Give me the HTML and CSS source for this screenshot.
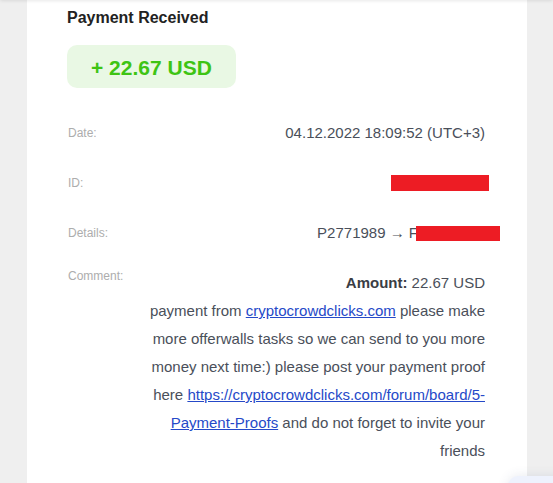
FILE: index.html
```html
<!DOCTYPE html>
<html lang="en">
<head>
<meta charset="utf-8">
<title>Payment Received</title>
<link rel="stylesheet" href="styles.css">
</head>
<body>
<div class="topbar"></div>
<main class="page">
  <section class="card">
    <h1 class="title">Payment Received</h1>
    <div class="amount-pill">+ 22.67 USD</div>
    <div class="rows">
      <div class="row">
        <div class="label">Date:</div>
        <div class="value">04.12.2022 18:09:52 (UTC+3)</div>
      </div>
      <div class="row">
        <div class="label">ID:</div>
        <div class="value"><span class="redact redact-id"></span></div>
      </div>
      <div class="row">
        <div class="label">Details:</div>
        <div class="value">P2771989 → F<span class="redact redact-details"></span></div>
      </div>
      <div class="row row-comment">
        <div class="label">Comment:</div>
        <div class="value"><b class="strong">Amount:</b> 22.67 USD<br>payment from <a href="#" class="link">cryptocrowdclicks.com</a> please make more offerwalls tasks so we can send to you more money next time:) please post your payment proof here <a href="#" class="link">https://cryptocrowdclicks.com/forum/board/5-Payment-Proofs</a> and do not forget to invite your friends</div>
      </div>
    </div>
  </section>
</main>
<div class="widget"></div>
</body>
</html>
```
FILE: styles.css
```css
html, body {
  margin: 0;
  padding: 0;
}
body {
  background: #efefef;
  font-family: "Liberation Sans", Arial, sans-serif;
  overflow: hidden;
}
.topbar {
  position: fixed;
  top: -10px;
  left: 0;
  right: 0;
  height: 10px;
  box-shadow: 0 0 4px rgba(0, 0, 0, 0.14);
  z-index: 5;
}
.page {
  padding-left: 27px;
}
.card {
  box-sizing: border-box;
  width: 500px;
  min-height: 483px;
  background: #ffffff;
  padding: 8px 42px 30px 40px;
}
.title {
  margin: 0;
  font-size: 16px;
  line-height: 20px;
  font-weight: bold;
  color: #222222;
}
.amount-pill {
  display: inline-block;
  margin-top: 17px;
  padding: 4px 24px 1px;
  line-height: 38px;
  font-size: 21px;
  font-weight: bold;
  color: #3ec414;
  background: #e9f8e4;
  border-radius: 10px;
}
.rows {
  display: flex;
  flex-direction: column;
  gap: 22px;
  margin-top: 31px;
}
.row {
  display: grid;
  grid-template-columns: 80px 1fr;
  align-items: start;
}
.label {
  font-size: 12px;
  line-height: 28px;
  color: #adadad;
  padding-left: 1px;
}
.row-comment .label {
  line-height: 14px;
}
.value {
  font-size: 15px;
  line-height: 28px;
  color: #4a4f5a;
  text-align: right;
}
.strong {
  color: #3a3d44;
}
.link {
  color: #2549c8;
  text-decoration: underline;
}
.redact {
  display: inline-block;
  background: #ed1c24;
  vertical-align: -3px;
}
.redact-id {
  width: 98px;
  height: 16px;
  margin-right: -4px;
}
.redact-details {
  width: 84px;
  height: 15px;
  margin-left: -2px;
  margin-right: -15px;
}
.widget {
  position: fixed;
  left: 508px;
  top: 476px;
  width: 70px;
  height: 40px;
  background: #eef2fd;
  border-radius: 10px;
  box-shadow: 0 0 12px rgba(60, 70, 120, 0.12);
}
```
